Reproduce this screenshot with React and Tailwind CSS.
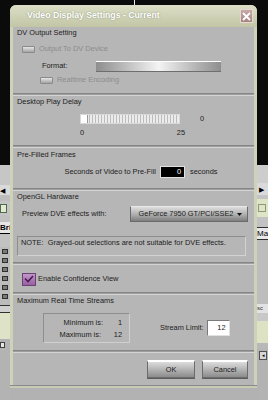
const font = "font-['Liberation_Sans',Arial,sans-serif]";

function Sep() {
  return <div className="h-[3px] shrink-0 border-t border-b border-t-[#858585] border-b-[#d4d4d4] bg-[#9e9e9e]" />;
}

function Header({ children, className = '' }) {
  return <div className={`h-[12px] leading-[12px] pl-[4px] text-[7.4px] text-[#1c1c1c] ${className}`}>{children}</div>;
}

function FlatBox() {
  return <div className="w-[13px] h-[7px] rounded-[1px] border border-[#8a8a8a] bg-gradient-to-b from-[#e6e6e6] to-[#a4a4a4] shrink-0" />;
}

function MetalButton({ children, w }) {
  return (
    <div
      className={`${w} h-[18px] flex items-center justify-center text-[7.4px] text-[#1c1c1c] border border-[#6c6c6c] border-t-[2px] border-t-white bg-gradient-to-b from-[#dcdcdc] via-[#b4b4b4] to-[#8c8c8c] shadow-[0_1px_0_#5c5c5c]`}
    >
      {children}
    </div>
  );
}

function LeftStrip() {
  return (
    <div className="w-[10px] flex flex-col shrink-0">
      <div className="h-[165px] bg-[#0b0b0b]" />
      <div className="h-[20px] bg-[#c6c6c6]" />
      <div className="h-[10px] bg-[#dadada] flex items-center text-[7px] leading-none text-black">◀</div>
      <div className="h-[6px] bg-[#bdbdbd]" />
      <div className="h-[14px] bg-[#c4c4c4] flex items-center">
        <div className="w-[7px] h-[9px] border border-[#4f6a52] bg-[#e4ead2]" />
      </div>
      <div className="h-[7px] bg-[#c0c0c0]" />
      <div className="h-[11px] bg-[#e6e6e6] text-[8px] leading-[11px] font-bold text-black overflow-hidden whitespace-nowrap">Bri</div>
      <div className="h-[1px] bg-black" />
      <div className="h-[13px] bg-[#c2c2c2]" />
      <div className="h-[58px] bg-[#bcbcbc] flex flex-col gap-[4px] pt-[2px]">
        {[0, 1, 2, 3, 4, 5].map((i) => (
          <div key={i} className="ml-[2px] w-[6px] h-[5px] border border-[#303030] bg-[#7a7a7a]" />
        ))}
      </div>
      <div className="h-[8px] bg-[#d0d0d0] border-t border-b border-[#303030]" />
      <div className="h-[26px] bg-[#dee2c6]" />
      <div className="h-[12px] bg-[#b4b4b4] flex items-center">
        <div className="w-[5px] h-[6px] border border-[#404040] bg-[#e8e8e8]" />
      </div>
      <div className="flex-1 bg-[#b3b3b3]" />
    </div>
  );
}

function RightStrip() {
  return (
    <div className="w-[11px] flex flex-col shrink-0">
      <div className="h-[165px] bg-[#0b0b0b]" />
      <div className="h-[18px] bg-[#cdcdcd]" />
      <div className="h-[12px] bg-[#dadada] flex items-center pl-[2px] text-[7px] leading-none text-black">▶</div>
      <div className="h-[4px] bg-[#c4c4c4]" />
      <div className="h-[18px] bg-[#dfe4c8] flex items-center pl-[1px]">
        <div className="w-[8px] h-[8px] border border-[#8c9a7a]" />
      </div>
      <div className="h-[11px] bg-[#c2c2c2] border-b border-[#303030]" />
      <div className="h-[12px] bg-[#e8e8e8] text-[8px] leading-[12px] text-black overflow-hidden whitespace-nowrap border-b border-[#303030]">Ma</div>
      <div className="h-[64px] bg-[#bdbdbd]" />
      <div className="h-[9px] bg-[#e2e2e2] text-[6px] leading-[9px] text-[#333] overflow-hidden whitespace-nowrap">sc</div>
      <div className="h-[8px] bg-[#c8c8c8]" />
      <div className="h-[22px] bg-[#dde2c4]" />
      <div className="h-[6px] bg-[#b8b8b8]" />
      <div className="h-[12px] bg-[#b4b4b4] flex items-center pl-[2px]">
        <div className="w-[8px] h-[9px] border border-[#505050] bg-[#d6d6d6] flex items-center justify-center text-[5px] leading-none">◂</div>
      </div>
      <div className="flex-1 bg-[#b3b3b3]" />
    </div>
  );
}

export default function App() {
  return (
    <div className={`w-[268px] h-[400px] flex overflow-hidden bg-[#0b0b0b] ${font}`}>
      <LeftStrip />
      <div className="w-[247px] flex flex-col shrink-0">
        <div className="h-[5px] shrink-0 bg-[#0b0b0b]">
          <div className="ml-[124px] w-px h-full bg-[#e8e8e8]" />
        </div>

        <div className="h-[383px] shrink-0 flex flex-col rounded-t-[6px] overflow-hidden bg-[#cfd2b9]">
          {/* title bar */}
          <div className="h-[22px] shrink-0 flex items-center pl-[17px] pr-[4px] bg-gradient-to-b from-[#dcdfc6] to-[#c2c6a6]">
            <div className="flex-1 text-[8.7px] font-bold text-white [text-shadow:0_0_1.5px_#7e8268] whitespace-nowrap">
              Video Display Settings - Current
            </div>
            <div className="w-[13px] h-[14px] flex items-center justify-center bg-gradient-to-b from-[#c7aaa6] to-[#a5847f] border border-[#e6d8d6]">
              <svg width="9" height="9" viewBox="0 0 9 9">
                <path d="M1 1 L8 8 M8 1 L1 8" stroke="#ffffff" strokeWidth="1.8" />
              </svg>
            </div>
          </div>

          {/* body */}
          <div className="mx-[3px] h-[358px] flex flex-col bg-[#b6b6b6]">
            {/* DV Output Setting */}
            <div className="h-[66px] shrink-0">
              <Header>DV Output Setting</Header>
              <div className="mt-[5px] h-[10px] flex items-center pl-[9px]">
                <FlatBox />
                <span className="ml-[4px] text-[7.4px] text-[#8c8c8c]">Output To DV Device</span>
              </div>
              <div className="mt-[6px] h-[12px] flex items-center pl-[29px]">
                <span className="w-[54px] text-[7.4px] text-[#1c1c1c]">Format:</span>
                <div className="w-[125px] h-[11px] border-t border-t-white border-b border-b-[#6e6e6e] bg-gradient-to-r from-[#8e8e8e] via-[#f4f4f4] to-[#8e8e8e]" />
              </div>
              <div className="mt-[3px] h-[10px] flex items-center pl-[27px]">
                <FlatBox />
                <span className="ml-[4px] text-[7.4px] text-[#8c8c8c]">Realtime Encoding</span>
              </div>
            </div>
            <Sep />

            {/* Desktop Play Delay */}
            <div className="h-[49px] shrink-0">
              <Header>Desktop Play Delay</Header>
              <div className="mt-[6px] h-[10px] flex items-center pl-[67px]">
                <div className="w-[100px] h-[10px] flex border border-[#d8d8d8] bg-[repeating-linear-gradient(90deg,#ececec_0px,#ececec_2px,#bcbcbc_2px,#bcbcbc_3px)]">
                  <div className="w-[7px] h-full bg-white border-r border-[#9a9a9a]" />
                </div>
                <span className="ml-[20px] text-[7.4px] text-[#1c1c1c]">0</span>
              </div>
              <div className="mt-[4px] h-[10px] flex items-center pl-[67px]">
                <div className="w-[105px] flex justify-between text-[7.4px] text-[#1c1c1c]">
                  <span>0</span>
                  <span>25</span>
                </div>
              </div>
            </div>
            <Sep />

            {/* Pre-Filled Frames */}
            <div className="h-[40px] shrink-0">
              <Header className="mt-[1px]">Pre-Filled Frames</Header>
              <div className="mt-[5px] h-[12px] flex items-center pl-[47px]">
                <span className="w-[96px] text-right text-[7.4px] text-[#1c1c1c] whitespace-nowrap">Seconds of Video to Pre-Fill</span>
                <div className="ml-[4px] w-[25px] h-[12px] bg-black border border-[#e0e0e0] flex items-center justify-end pr-[3px] text-[7.4px] text-white">0</div>
                <span className="ml-[5px] text-[7.4px] text-[#1c1c1c]">seconds</span>
              </div>
            </div>
            <Sep />

            {/* OpenGL Hardware */}
            <div className="h-[71px] shrink-0">
              <div className="h-[11px] leading-[11px] pl-[4px] text-[7.4px] text-[#1c1c1c]">OpenGL Hardware</div>
              <div className="mt-[4px] h-[16px] flex items-center pl-[9px]">
                <span className="w-[108px] text-[7.4px] text-[#1c1c1c]">Preview DVE effects with:</span>
                <div className="w-[118px] h-[16px] flex items-center border border-[#6a6a6a] border-t-[#e8e8e8] bg-gradient-to-b from-[#dedede] via-[#b2b2b2] to-[#7e7e7e]">
                  <span className="flex-1 text-center text-[7.4px] text-[#1c1c1c] whitespace-nowrap pl-[4px]">GeForce 7950 GT/PCI/SSE2</span>
                  <svg width="5" height="3" viewBox="0 0 5 3" className="mr-[5px]">
                    <path d="M0 0 H5 L2.5 3 Z" fill="#111" />
                  </svg>
                </div>
              </div>
              <div className="mt-[14px] ml-[4px] w-[229px] h-[20px] border border-[#d2d2d2] border-t-[#8e8e8e] border-l-[#8e8e8e] pt-[1px] pl-[3px] text-[7.4px] leading-[10px] text-[#1c1c1c] whitespace-nowrap">
                NOTE:&nbsp; Grayed-out selections are not suitable for DVE effects.
              </div>
            </div>
            <Sep />

            {/* Enable Confidence View */}
            <div className="h-[27px] shrink-0">
              <div className="mt-[7px] h-[14px] flex items-center pl-[9px]">
                <div className="w-[14px] h-[13px] flex items-center justify-center border border-[#6b3f78] bg-gradient-to-b from-[#c296c8] to-[#96609e]">
                  <svg width="10" height="8" viewBox="0 0 10 8">
                    <path d="M1 3.5 L4 6.5 L9 1" stroke="#4a1a58" strokeWidth="1.6" fill="none" />
                  </svg>
                </div>
                <span className="ml-[2px] text-[7.4px] text-[#1c1c1c]">Enable Confidence View</span>
              </div>
            </div>
            <Sep />

            {/* Maximum Real Time Streams */}
            <div className="h-[55px] shrink-0">
              <Header>Maximum Real Time Streams</Header>
              <div className="mt-[6px] flex items-center">
                <div className="ml-[30px] w-[87px] h-[30px] pt-[3px] border border-[#d0d0d0] border-t-[#8e8e8e] border-l-[#8e8e8e] text-[7.4px] text-[#1c1c1c]">
                  <div className="h-[12px] flex items-center">
                    <span className="w-[59px] text-right">Minimum is:</span>
                    <span className="w-[19px] text-right">1</span>
                  </div>
                  <div className="h-[12px] flex items-center">
                    <span className="w-[57px] text-right">Maximum is:</span>
                    <span className="w-[21px] text-right">12</span>
                  </div>
                </div>
                <span className="ml-[30px] text-[7.4px] text-[#1c1c1c] whitespace-nowrap">Stream Limit:</span>
                <div className="ml-[3px] w-[23px] h-[16px] bg-white border border-[#7a7a7a] border-b-[#e0e0e0] border-r-[#e0e0e0] flex items-center justify-end pr-[3px] text-[7.4px] text-[#1c1c1c]">12</div>
              </div>
            </div>
            <Sep />

            {/* buttons */}
            <div className="flex-1 flex items-start pt-[7px] pl-[134px] gap-[7px]">
              <MetalButton w="w-[48px]">OK</MetalButton>
              <MetalButton w="w-[46px]">Cancel</MetalButton>
            </div>
          </div>
          <div className="h-[3px] shrink-0 bg-[#c8cbb3] border-t border-[#8a8a8a]" />
        </div>

        <div className="flex-1 bg-[#b2b2b2]" />
      </div>
      <RightStrip />
    </div>
  );
}
